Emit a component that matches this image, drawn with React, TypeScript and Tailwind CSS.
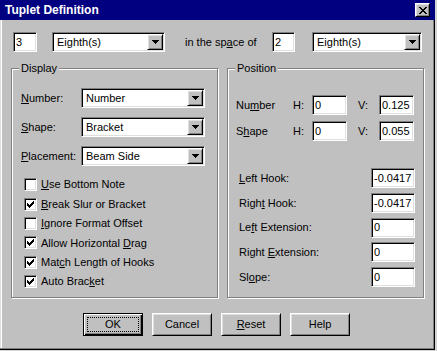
import type { ReactNode } from "react";

const sunken =
  "border border-t-[#808080] border-l-[#808080] border-b-white border-r-white shadow-[inset_1px_1px_0_#000,inset_-1px_-1px_0_#dfdfdf]";
const raised =
  "border border-t-white border-l-white border-b-black border-r-black shadow-[inset_1px_1px_0_#dfdfdf,inset_-1px_-1px_0_#808080]";

function Field({ value, w }: { value: string; w: string }) {
  return (
    <div className={`${sunken} ${w} h-[20px] bg-white flex items-center pl-[2px] shrink-0 overflow-hidden whitespace-nowrap`}>
      {value}
    </div>
  );
}

function Arrow() {
  return (
    <div className={`${raised} w-[16px] h-[16px] mr-[1px] bg-[#c0c0c0] flex items-center justify-center shrink-0`}>
      <svg width="7" height="4" viewBox="0 0 7 4" shapeRendering="crispEdges">
        <rect x="0" y="0" width="7" height="1" fill="#000" />
        <rect x="1" y="1" width="5" height="1" fill="#000" />
        <rect x="2" y="2" width="3" height="1" fill="#000" />
        <rect x="3" y="3" width="1" height="1" fill="#000" />
      </svg>
    </div>
  );
}

function Select({ value, w }: { value: string; w: string }) {
  return (
    <div className={`${sunken} ${w} h-[20px] bg-white flex items-center shrink-0`}>
      <span className="flex-1 pl-[4px]">{value}</span>
      <Arrow />
    </div>
  );
}

function Check({ checked, children }: { checked: boolean; children: ReactNode }) {
  return (
    <div className="h-[19.4px] flex items-center pl-[12px] gap-[4px]">
      <div className={`${sunken} w-[13px] h-[13px] bg-white flex items-center justify-center`}>
        {checked && (
          <svg width="7" height="7" viewBox="0 0 7 7" shapeRendering="crispEdges">
            <rect x="6" y="0" width="1" height="1" />
            <rect x="5" y="1" width="2" height="1" />
            <rect x="0" y="2" width="1" height="1" />
            <rect x="4" y="2" width="3" height="1" />
            <rect x="0" y="3" width="2" height="1" />
            <rect x="3" y="3" width="3" height="1" />
            <rect x="0" y="4" width="5" height="1" />
            <rect x="1" y="5" width="3" height="1" />
            <rect x="2" y="6" width="1" height="1" />
          </svg>
        )}
      </div>
      <span>{children}</span>
    </div>
  );
}

function Group({ label, w, children }: { label: string; w: string; children: ReactNode }) {
  return (
    <div className={`relative ${w} h-[230px] border border-[#808080] shadow-[1px_1px_0_#fff,inset_1px_1px_0_#fff]`}>
      <span className="absolute -top-[8px] left-[7px] px-[2px] bg-[#c0c0c0] leading-[14px]">{label}</span>
      {children}
    </div>
  );
}

function Btn({ children, isDefault }: { children: ReactNode; isDefault?: boolean }) {
  if (isDefault) {
    return (
      <div className="w-[60px] h-[23px] border border-black bg-[#c0c0c0] shadow-[inset_1px_1px_0_#fff,inset_-1px_-1px_0_#000,inset_-2px_-2px_0_#808080] flex items-center justify-center">
        <span className="w-[52px] h-[15px] border border-dotted border-black flex items-center justify-center">
          {children}
        </span>
      </div>
    );
  }
  return (
    <div className="w-[60px] h-[23px] border border-t-white border-l-white border-b-black border-r-black bg-[#c0c0c0] shadow-[inset_1px_1px_0_#dfdfdf,inset_-1px_-1px_0_#808080] flex items-center justify-center">
      {children}
    </div>
  );
}

function Row({ label, value }: { label: ReactNode; value: string }) {
  return (
    <div className="h-[20px] flex items-center pl-[11px]">
      <span className="w-[132px]">{label}</span>
      <Field value={value} w="w-[44px]" />
    </div>
  );
}

export default function App() {
  return (
    <div className="w-[437px] h-[351px] bg-[#d4d4d4] overflow-hidden font-['Liberation_Sans',Arial,sans-serif] text-[11px] text-black">
      <div className="w-[435px] h-[350px] bg-[#c0c0c0] flex flex-col shadow-[inset_-1px_-1px_0_#000,inset_-2px_-2px_0_#808080,inset_1px_0_0_#dfdfdf,inset_2px_0_0_#fff]">
        {/* title bar */}
        <div className="h-[20px] bg-[#000080] flex items-center justify-between pl-[5px] pr-[5px]">
          <span className="text-white font-bold text-[12px]">Tuplet Definition</span>
          <div className={`${raised} w-[15px] h-[14px] bg-[#c0c0c0] flex items-center justify-center`}>
            <svg width="8" height="7" viewBox="0 0 8 7" shapeRendering="crispEdges">
              <rect x="0" y="0" width="2" height="1" />
              <rect x="6" y="0" width="2" height="1" />
              <rect x="1" y="1" width="2" height="1" />
              <rect x="5" y="1" width="2" height="1" />
              <rect x="2" y="2" width="4" height="1" />
              <rect x="3" y="3" width="2" height="1" />
              <rect x="2" y="4" width="4" height="1" />
              <rect x="1" y="5" width="2" height="1" />
              <rect x="5" y="5" width="2" height="1" />
              <rect x="0" y="6" width="2" height="1" />
              <rect x="6" y="6" width="2" height="1" />
            </svg>
          </div>
        </div>

        {/* tuplet ratio */}
        <div className="mt-[12px] h-[20px] flex items-center pl-[13px]">
          <Field value="3" w="w-[24px]" />
          <div className="w-[15px]" />
          <Select value="Eighth(s)" w="w-[113px]" />
          <span className="w-[107px] pl-[20px]">
            in the sp<u>a</u>ce of
          </span>
          <Field value="2" w="w-[23px]" />
          <div className="w-[17px]" />
          <Select value="Eighth(s)" w="w-[110px]" />
        </div>

        {/* groups */}
        <div className="mt-[16px] flex pl-[11px] gap-[9px]">
          <Group label="Display" w="w-[207px]">
            <div className="pt-[19px] flex flex-col gap-[9px] pl-[9px]">
              <div className="flex items-center">
                <span className="w-[60px]">
                  <u>N</u>umber:
                </span>
                <Select value="Number" w="w-[124px]" />
              </div>
              <div className="flex items-center">
                <span className="w-[60px]">
                  <u>S</u>hape:
                </span>
                <Select value="Bracket" w="w-[124px]" />
              </div>
              <div className="flex items-center">
                <span className="w-[60px]">
                  <u>P</u>lacement:
                </span>
                <Select value="Beam Side" w="w-[124px]" />
              </div>
            </div>
            <div className="mt-[9px] flex flex-col">
              <Check checked={false}>
                <u>U</u>se Bottom Note
              </Check>
              <Check checked>
                <u>B</u>reak Slur or Bracket
              </Check>
              <Check checked={false}>
                <u>I</u>gnore Format Offset
              </Check>
              <Check checked>
                Allow Horizontal <u>D</u>rag
              </Check>
              <Check checked>
                Mat<u>c</u>h Length of Hooks
              </Check>
              <Check checked>
                Auto Brac<u>k</u>et
              </Check>
            </div>
          </Group>

          <Group label="Position" w="w-[197px]">
            <div className="pt-[26px] flex flex-col gap-[6px] pl-[8px]">
              <div className="h-[20px] flex items-center">
                <span className="w-[57px]">
                  Nu<u>m</u>ber
                </span>
                <span className="w-[19px]">H:</span>
                <Field value="0" w="w-[35px]" />
                <span className="w-[32px] pl-[11px]">V:</span>
                <Field value="0.125" w="w-[35px]" />
              </div>
              <div className="h-[20px] flex items-center">
                <span className="w-[57px]">
                  S<u>h</u>ape
                </span>
                <span className="w-[19px]">H:</span>
                <Field value="0" w="w-[35px]" />
                <span className="w-[32px] pl-[11px]">V:</span>
                <Field value="0.055" w="w-[35px]" />
              </div>
            </div>
            <div className="mt-[27px] flex flex-col gap-[4.75px]">
              <Row label={<><u>L</u>eft Hook:</>} value="-0.0417" />
              <Row label={<>Righ<u>t</u> Hook:</>} value="-0.0417" />
              <Row label={<>Le<u>f</u>t Extension:</>} value="0" />
              <Row label={<>Right <u>E</u>xtension:</>} value="0" />
              <Row label={<>Sl<u>o</u>pe:</>} value="0" />
            </div>
          </Group>
        </div>

        {/* buttons */}
        <div className="mt-[15px] flex pl-[83px] gap-[9px]">
          <Btn isDefault>OK</Btn>
          <Btn>Cancel</Btn>
          <Btn>
            <u>R</u>eset
          </Btn>
          <Btn>Help</Btn>
        </div>
      </div>
    </div>
  );
}
